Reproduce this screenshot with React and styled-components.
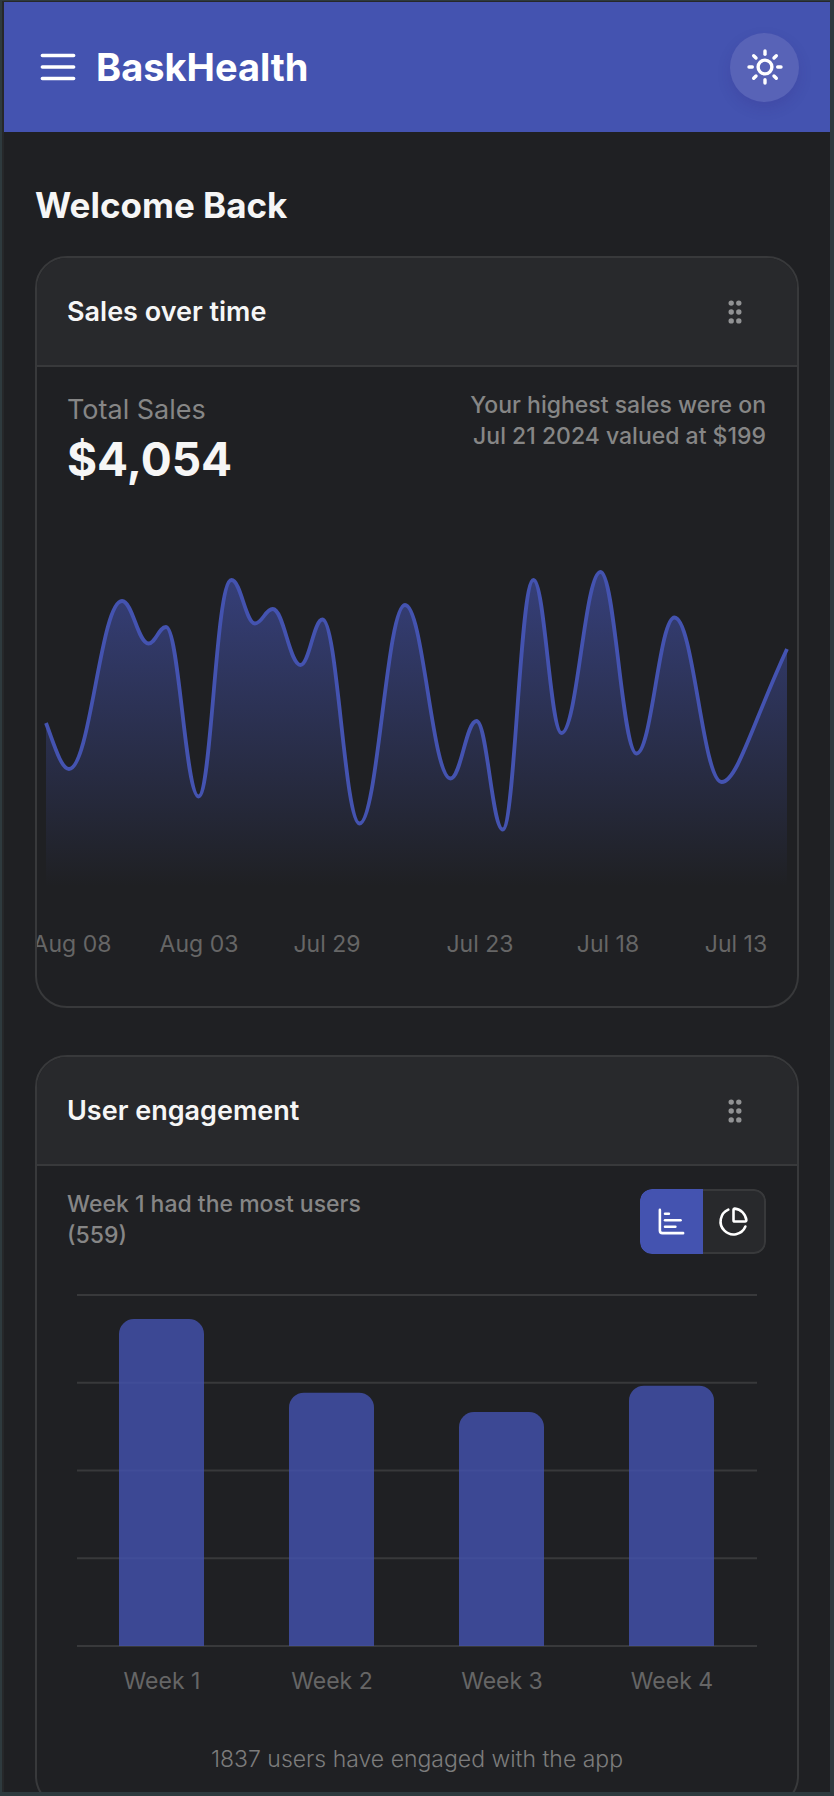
import React, { useState } from "react";
import styled, { createGlobalStyle } from "styled-components";
import { ChartBar, ChartPie } from "lucide-react";

const color = {
  frame: "#2e3a3e",
  edge: "#26282a",
  page: "#1f2023",
  raised: "#28292c",
  line: "#38393b",
  primary: "#4453b0",
  text: "#f6f6f6",
  muted: "#868686",
  faint: "#666666",
  note: "#7c7c7c",
};

const GlobalStyle = createGlobalStyle`
  *, *::before, *::after { box-sizing: border-box; }
  body {
    margin: 0;
    background: ${color.frame};
    color: ${color.text};
    font-family: Inter, "Liberation Sans", sans-serif;
    -webkit-font-smoothing: antialiased;
  }
  h1, h2, h3, p { margin: 0; }
  button { font: inherit; color: inherit; padding: 0; border: 0; cursor: pointer; }
`;

const Frame = styled.div`
  height: 100vh;
  padding: 1px 4px 4px 2px;
  background: ${color.frame};
`;

const Screen = styled.div`
  height: 100%;
  overflow: hidden;
  border-top: 1px solid ${color.edge};
  border-left: 2px solid ${color.edge};
  background: ${color.page};
`;

const TopBar = styled.header`
  display: flex;
  align-items: center;
  gap: 15px;
  height: 130px;
  padding: 0 31px;
  background: ${color.primary};
`;

const MenuButton = styled.button`
  display: grid;
  place-items: center;
  width: 46px;
  height: 46px;
  background: none;
`;

const Brand = styled.h1`
  flex: 1;
  color: #ffffff;
  font-size: 38px;
  font-weight: 700;
  line-height: 48px;
`;

const ThemeButton = styled.button`
  display: grid;
  place-items: center;
  width: 69px;
  height: 69px;
  border-radius: 50%;
  background: #5863b7;
  box-shadow: 0 6px 14px rgba(50, 30, 120, 0.16);
`;

const Content = styled.main`
  display: flex;
  flex-direction: column;
  padding: 49px 31px 0;
`;

const PageTitle = styled.h2`
  margin-bottom: 27px;
  font-size: 35px;
  font-weight: 700;
  line-height: 48px;
`;

const Card = styled.section`
  flex: none;
  margin-bottom: 47px;
  border: 2px solid ${color.line};
  border-radius: 32px;
  overflow: hidden;
`;

const CardHeader = styled.div`
  display: flex;
  align-items: center;
  justify-content: space-between;
  height: 109px;
  padding: 0 46px 0 30px;
  border-bottom: 2px solid ${color.line};
  background: ${color.raised};
`;

const CardTitle = styled.h3`
  font-size: 27px;
  font-weight: 600;
  line-height: 36px;
`;

const DragButton = styled.button`
  display: grid;
  place-items: center;
  width: 32px;
  height: 40px;
  background: none;
  cursor: grab;
`;

const Summary = styled.div`
  display: flex;
  justify-content: space-between;
  align-items: flex-start;
  height: ${(p) => p.$height};
  padding: 23px 31px 0 30px;
`;

const Total = styled.div`
  display: flex;
  flex-direction: column;
  padding-top: 1px;
`;

const TotalLabel = styled.span`
  color: ${color.muted};
  font-size: 27px;
  line-height: 38px;
`;

const TotalValue = styled.strong`
  font-size: 46px;
  font-weight: 700;
  line-height: 60px;
`;

const Insight = styled.p`
  max-width: 304px;
  color: ${color.muted};
  font-size: 23px;
  font-weight: 500;
  line-height: 31px;
  text-align: ${(p) => p.$align || "left"};
`;

const Toggle = styled.div`
  display: flex;
  height: 65px;
  border-radius: 12px;
  overflow: hidden;
`;

const ToggleButton = styled.button`
  display: grid;
  place-items: center;
  width: 63px;
  color: #ffffff;
  background: ${(p) => (p.$active ? color.primary : color.raised)};
  border: 2px solid ${(p) => (p.$active ? color.primary : color.line)};

  &:first-child { border-radius: 12px 0 0 12px; }
  &:last-child { border-left: 0; border-radius: 0 12px 12px 0; }
`;

const Chart = styled.svg`
  display: block;
  width: 100%;
  height: auto;
`;

const AxisLabel = styled.text`
  fill: ${color.faint};
  font-family: Inter, "Liberation Sans", sans-serif;
  font-size: 23px;
  text-anchor: middle;
`;

const Footnote = styled.p`
  padding: 11px 31px 31px;
  color: ${color.note};
  font-size: 23px;
  font-weight: 300;
  line-height: 31px;
  text-align: center;
`;

function MenuIcon() {
  return (
    <svg width="40" height="32" viewBox="-20 -16 40 32" stroke="#fff" strokeWidth="3.6" strokeLinecap="round">
      <path d="M-15.6 -11.5h31.2M-15.6 0h31.2M-15.6 11.5h31.2" />
    </svg>
  );
}

function SunIcon() {
  return (
    <svg width="40" height="40" viewBox="-20 -20 40 40" fill="none" stroke="#fff" strokeWidth="3.4" strokeLinecap="round">
      <circle r="6.9" />
      {[0, 45, 90, 135, 180, 225, 270, 315].map((a) => (
        <path key={a} d="M0 -12.7v-3.3" transform={`rotate(${a})`} />
      ))}
    </svg>
  );
}

function DragIcon() {
  return (
    <svg width="16" height="26" viewBox="-8 -13 16 26" fill="#919294">
      {[-8.9, 0, 8.9].map((y) =>
        [-3.8, 3.8].map((x) => <circle key={`${x}${y}`} cx={x} cy={y} r="2.7" />)
      )}
    </svg>
  );
}

function PanelHeader({ title }) {
  return (
    <CardHeader>
      <CardTitle>{title}</CardTitle>
      <DragButton aria-label={`Move ${title}`}>
        <DragIcon />
      </DragButton>
    </CardHeader>
  );
}

// Turning points of the sales curve: x, y, and how far the curve stays flat
// before the point, as a share of the distance to its neighbour.
const turns = [
  [32, 269], [85, 101], [111.5, 143.5], [129, 127],
  [161.5, 296.5], [194.5, 80, 0.48], [218, 123.5], [235.7, 109],
  [263.5, 165], [285.5, 119.5], [322.5, 323.5], [368, 105],
  [413.5, 278.5], [439.5, 221], [465.7, 329.5], [496.5, 80, 0.44],
  [524.5, 233], [563.5, 72], [599.5, 253.5], [637.5, 117.5], [684.7, 282],
];

function salesPath() {
  let d = "M9 223C17 244 24 269 32 269";
  for (let i = 1; i < turns.length; i++) {
    const [x0, y0] = turns[i - 1];
    const [x1, y1, hold = 0.4] = turns[i];
    const w = x1 - x0;
    d += `C${x0 + w * 0.4} ${y0} ${x1 - w * hold} ${y1} ${x1} ${y1}`;
  }
  return d + "C700 282 715 225 750 149";
}

const dates = [
  ["Aug 08", 35], ["Aug 03", 162], ["Jul 29", 290],
  ["Jul 23", 443], ["Jul 18", 571], ["Jul 13", 699],
];

function SalesChart() {
  const line = salesPath();
  return (
    <Chart viewBox="0 0 760 506" role="img" aria-label="Sales over time">
      <defs>
        <linearGradient id="sales" gradientUnits="userSpaceOnUse" x1="0" y1="72" x2="0" y2="386">
          <stop offset="0" stopColor={color.primary} stopOpacity="0.62" />
          <stop offset="1" stopColor={color.primary} stopOpacity="0" />
        </linearGradient>
      </defs>
      <path d={`${line}V390H9Z`} fill="url(#sales)" />
      <path d={line} fill="none" stroke={color.primary} strokeWidth="3.8" />
      {dates.map(([label, x]) => (
        <AxisLabel key={label} x={x} y="452">{label}</AxisLabel>
      ))}
    </Chart>
  );
}

const weeks = [559, 433, 400, 445];

function EngagementChart() {
  const base = 377;
  return (
    <Chart viewBox="0 0 760 464" role="img" aria-label="Users per week">
      {[0, 1, 2, 3, 4].map((n) => (
        <rect key={n} x="40" y={base - 1 - n * 87.75} width="680" height="2" fill={color.line} />
      ))}
      {weeks.map((users, i) => {
        const x = 82 + i * 170;
        const top = base - users * 0.585;
        return (
          <path
            key={i}
            d={`M${x} ${base}V${top + 15}a15 15 0 0 1 15 -15h55a15 15 0 0 1 15 15V${base}Z`}
            fill={color.primary}
            fillOpacity="0.8"
          />
        );
      })}
      {weeks.map((_, i) => (
        <AxisLabel key={i} x={125 + i * 170} y="420">{`Week ${i + 1}`}</AxisLabel>
      ))}
    </Chart>
  );
}

export default function App() {
  const [view, setView] = useState("bar");
  return (
    <>
      <GlobalStyle />
      <Frame>
        <Screen>
          <TopBar>
            <MenuButton aria-label="Open menu"><MenuIcon /></MenuButton>
            <Brand>BaskHealth</Brand>
            <ThemeButton aria-label="Switch to light theme"><SunIcon /></ThemeButton>
          </TopBar>
          <Content>
            <PageTitle>Welcome Back</PageTitle>
            <Card>
              <PanelHeader title="Sales over time" />
              <Summary $height="133px">
                <Total>
                  <TotalLabel>Total Sales</TotalLabel>
                  <TotalValue>$4,054</TotalValue>
                </Total>
                <Insight $align="right">Your highest sales were on Jul 21 2024 valued at $199</Insight>
              </Summary>
              <SalesChart />
            </Card>
            <Card>
              <PanelHeader title="User engagement" />
              <Summary $height="103px">
                <Insight>Week 1 had the most users (559)</Insight>
                <Toggle>
                  <ToggleButton aria-label="Bar chart" $active={view === "bar"} onClick={() => setView("bar")}>
                    <ChartBar size={31} />
                  </ToggleButton>
                  <ToggleButton aria-label="Pie chart" $active={view === "pie"} onClick={() => setView("pie")}>
                    <ChartPie size={31} />
                  </ToggleButton>
                </Toggle>
              </Summary>
              <EngagementChart />
              <Footnote>1837 users have engaged with the app</Footnote>
            </Card>
          </Content>
        </Screen>
      </Frame>
    </>
  );
}
